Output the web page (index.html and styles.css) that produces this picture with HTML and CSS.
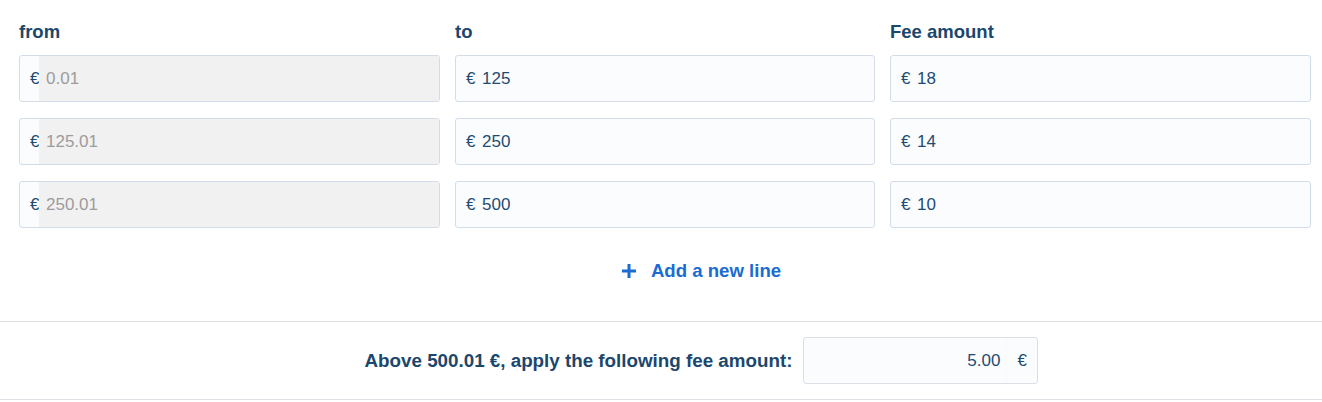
FILE: index.html
```html
<!DOCTYPE html>
<html>
<head>
<meta charset="utf-8">
<link rel="stylesheet" href="styles.css">
</head>
<body>
<div class="fees">
  <div class="grid">
    <div class="head">from</div>
    <div class="head">to</div>
    <div class="head">Fee amount</div>

    <div class="field disabled"><span class="pre">€</span><span class="val">0.01</span></div>
    <div class="field"><span class="pre">€</span><span class="val">125</span></div>
    <div class="field"><span class="pre">€</span><span class="val">18</span></div>

    <div class="field disabled"><span class="pre">€</span><span class="val">125.01</span></div>
    <div class="field"><span class="pre">€</span><span class="val">250</span></div>
    <div class="field"><span class="pre">€</span><span class="val">14</span></div>

    <div class="field disabled"><span class="pre">€</span><span class="val">250.01</span></div>
    <div class="field"><span class="pre">€</span><span class="val">500</span></div>
    <div class="field"><span class="pre">€</span><span class="val">10</span></div>
  </div>
  <div class="add-row">
    <a class="add">
      <svg width="14" height="14" viewBox="0 0 14 14"><path d="M5.5 0h3v5.5H14v3H8.5V14h-3V8.5H0v-3h5.5z" fill="#1a6bd2"/></svg>
      <span>Add a new line</span>
    </a>
  </div>
</div>
<div class="above">
  <span class="above-label">Above 500.01 €, apply the following fee amount:</span>
  <div class="field suffix"><span class="val">5.00</span><span class="suf">€</span></div>
</div>
</body>
</html>
```
FILE: styles.css
```css
html, body {
  margin: 0;
  padding: 0;
  background: #fff;
  font-family: "Liberation Sans", Arial, sans-serif;
  font-size: 17px;
  color: #1f4b72;
}
.fees {
  padding: 20px 11px 0 19px;
}
.grid {
  display: grid;
  grid-template-columns: 421px 420px 421px;
  column-gap: 15px;
  row-gap: 16px;
}
.head {
  font-weight: bold;
  font-size: 18.5px;
  color: #1c476c;
  height: 24px;
  line-height: 24px;
  margin-bottom: -5px;
}
.field {
  display: flex;
  align-items: center;
  height: 47px;
  box-sizing: border-box;
  border: 1px solid #d3dde9;
  border-radius: 3px;
  background: #fafcfe;
  overflow: hidden;
}
.pre {
  padding-left: 10px;
  width: 9px;
  height: 100%;
  display: flex;
  align-items: center;
  color: #1f4b72;
}
.val {
  flex: 1;
  height: 100%;
  display: flex;
  align-items: center;
  padding-left: 7px;
}
.disabled .val {
  background: #f1f1f1;
  color: #9c9c9c;
}
.add-row {
  display: flex;
  justify-content: center;
  padding: 31px 0 0 73px;
  height: 63px;
  box-sizing: border-box;
}
.add {
  display: flex;
  align-items: center;
  gap: 15px;
  font-weight: bold;
  font-size: 18.6px;
  color: #1a6bd2;
  height: 24px;
}
.above {
  margin-top: 30px;
  border-top: 1px solid #dcdfe4;
  border-bottom: 1px solid #dcdfe4;
  height: 79px;
  box-sizing: border-box;
  display: flex;
  align-items: center;
  justify-content: center;
  gap: 11px;
  padding-left: 81px;
}
.above-label {
  font-weight: bold;
  font-size: 18.8px;
  color: #1c476c;
}
.suffix {
  width: 235px;
  border-color: #dbe0e8;
}
.suffix .val {
  justify-content: flex-end;
  padding: 0 6px 0 0;
}
.suf {
  width: 31px;
  height: 100%;
  display: flex;
  align-items: center;
  padding-left: 10px;
  box-sizing: border-box;
  border-left: 1px solid #f8f9fb;
}
```
